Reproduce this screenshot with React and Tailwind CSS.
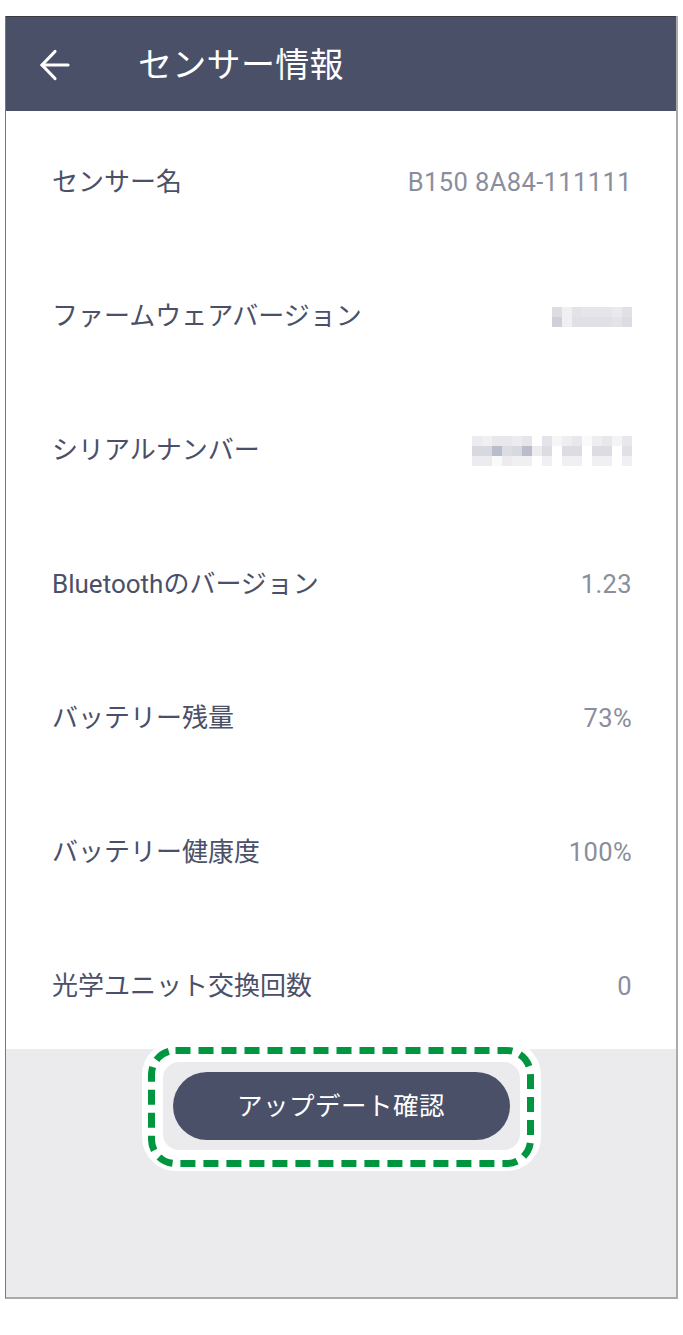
import React from 'react';

const FONT = { fontFamily: 'Roboto, "Noto Sans CJK JP", sans-serif' };

const FIRMWARE = [
  ['#dcdce2', '#f0f0f2', '#e2e2e8', '#e6e6ea', '#e6e6ea', '#e6e6ea', '#eaeaee', '#e0e0e6'],
  ['#cfd0d8', '#f0f0f2', '#e0e0e6', '#e0e0e6', '#e0e0e6', '#e0e0e6', '#e4e4e8', '#dcdce2'],
];

const SERIAL = [
  ['#ececf0', '#f0f0f2', '#e8e8ec', '#e8e8ec', '#ececf0', '#e6e6ea', '#ffffff', '#e4e4ea', '#f6f6f8', '#eeeef0', '#e8e8ec', '#fafafa', '#eeeef0', '#e8e8ec', '#f4f4f6', '#e8e8ec'],
  ['#d8d8e0', '#d8d8e0', '#b8bccb', '#dcdce2', '#d8d8e0', '#b8bccb', '#ececf0', '#dcdce2', '#ffffff', '#dcdce2', '#dcdce2', '#ffffff', '#dcdce2', '#dcdce2', '#ffffff', '#e0e0e6'],
  ['#ececf0', '#ececf0', '#fafafa', '#ececf0', '#f0f0f2', '#f0f0f2', '#ffffff', '#f0f0f2', '#ffffff', '#f0f0f2', '#f0f0f2', '#ffffff', '#f0f0f2', '#f0f0f2', '#ffffff', '#f0f0f2'],
];

function Mosaic({ cells }) {
  return (
    <div className="flex flex-col">
      {cells.map((row, r) => (
        <div key={r} className="flex">
          {row.map((c, i) => (
            <div key={i} className="w-[10px] h-[10px]" style={{ backgroundColor: c }} />
          ))}
        </div>
      ))}
    </div>
  );
}

const ROWS = [
  { label: 'センサー名', value: 'B150 8A84-111111' },
  { label: 'ファームウェアバージョン', mosaic: FIRMWARE },
  { label: 'シリアルナンバー', mosaic: SERIAL },
  { label: 'Bluetoothのバージョン', value: '1.23' },
  { label: 'バッテリー残量', value: '73%' },
  { label: 'バッテリー健康度', value: '100%' },
  { label: '光学ユニット交換回数', value: '0' },
];

export default function App() {
  return (
    <div className="w-[683px] h-[1335px] bg-white pt-[16px]" style={FONT}>
      <div className="ml-[5px] w-[673px] border-l border-l-[#777] border-r-2 border-r-[#aaa] border-b-2 border-b-[#aaa]">
        {/* header */}
        <div className="h-[95px] bg-[#4b5069] border-t border-t-[#3a3a40] flex items-center pt-[2px]">
          <svg width="34" height="34" viewBox="0 0 34 34" className="ml-[31px]" fill="none" stroke="white" strokeWidth="3.2" strokeLinecap="round" strokeLinejoin="round">
            <path d="M5 17 H31" />
            <path d="M18 3.5 L5 17 L18 30.5" />
          </svg>
          <h1 className="ml-[67px] text-white text-[34px] leading-none tracking-[0.3px]">センサー情報</h1>
        </div>

        {/* rows */}
        <div className="bg-white">
          {ROWS.map((row) => (
            <div key={row.label} className="h-[134px] flex items-center justify-between pl-[46px] pr-[44px] pt-[9px]">
              <span className="text-[26px] text-[#4b5069]">{row.label}</span>
              {row.mosaic ? (
                <Mosaic cells={row.mosaic} />
              ) : (
                <span className="text-[25.5px] text-[#8a8e9c] tracking-[0.4px]">{row.value}</span>
              )}
            </div>
          ))}
        </div>

        {/* footer */}
        <div className="h-[248px] bg-[#ebebed] flex justify-center">
          <div className="relative -mt-[8px] self-start bg-white rounded-[34px] p-[21px]">
            <svg className="absolute inset-0 w-full h-full pointer-events-none" preserveAspectRatio="none">
              <rect x="9.5" y="9.5" width="379" height="113" rx="24" fill="none" stroke="#009640" strokeWidth="7" strokeDasharray="15 8" />
            </svg>
            <div className="bg-[#ebebed] rounded-[16px] p-[10px]">
              <button className="w-[337px] h-[68px] rounded-full bg-[#4b5069] text-white text-[25.5px] tracking-[0.5px]">
                アップデート確認
              </button>
            </div>
          </div>
        </div>
      </div>
    </div>
  );
}
